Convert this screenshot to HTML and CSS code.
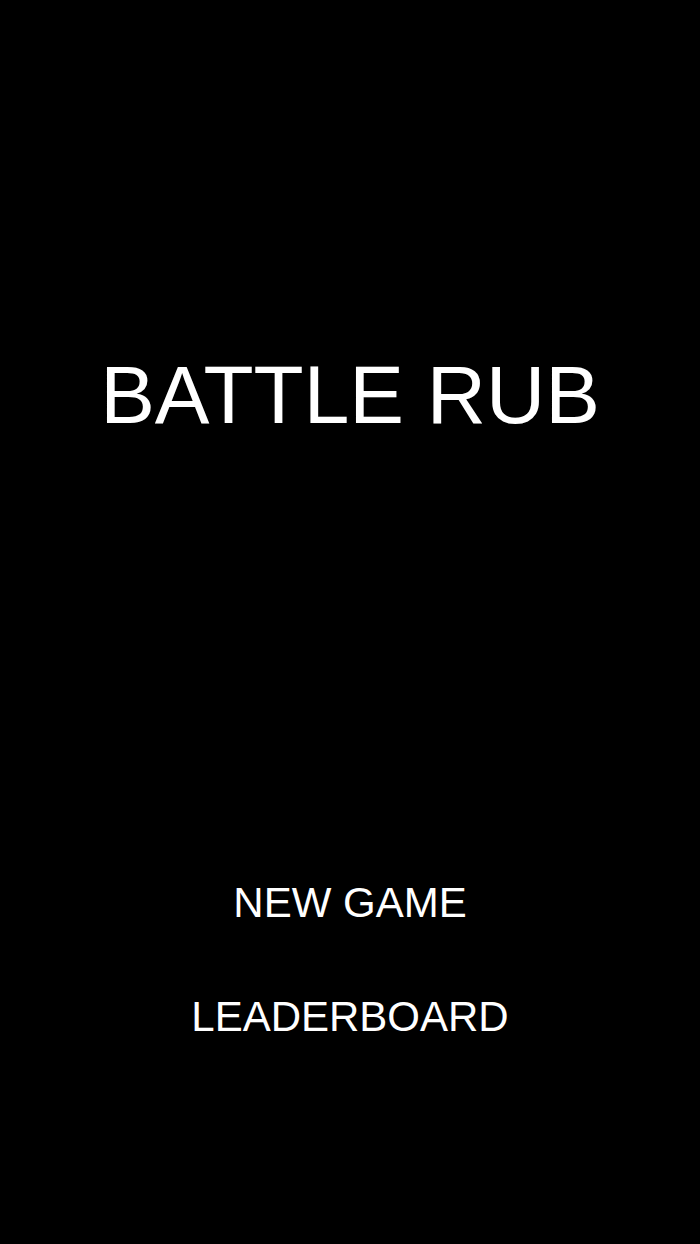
FILE: index.html
```html
<!DOCTYPE html>
<html lang="en">

<head>
    <meta charset="UTF-8">
    <meta name="viewport" content="width=device-width, initial-scale=1.0">
    <title>Battle Rub</title>
    <link rel="stylesheet" href="styles.css">
</head>

<body>
    <div class="screen">
        <h1 class="title">BATTLE RUB</h1>
        <div class="menu">
            <a class="menu-item" href="#">NEW GAME</a>
            <a class="menu-item" href="#">LEADERBOARD</a>
        </div>
    </div>
</body>

</html>
```

FILE: styles.css
```css
html,
body {
    margin: 0;
    height: 100%;
    background: #000;
}

.screen {
    display: flex;
    flex-direction: column;
    align-items: center;
    padding-top: 354px;
    font-family: "Liberation Sans", Arial, sans-serif;
    color: #fff;
}

.title {
    margin: 0;
    font-size: 82px;
    font-weight: normal;
    line-height: 1;
}

.menu {
    display: flex;
    flex-direction: column;
    align-items: center;
    gap: 72px;
    margin-top: 446px;
}

.menu-item {
    color: #fff;
    text-decoration: none;
    font-size: 42px;
    line-height: 1;
}
```
